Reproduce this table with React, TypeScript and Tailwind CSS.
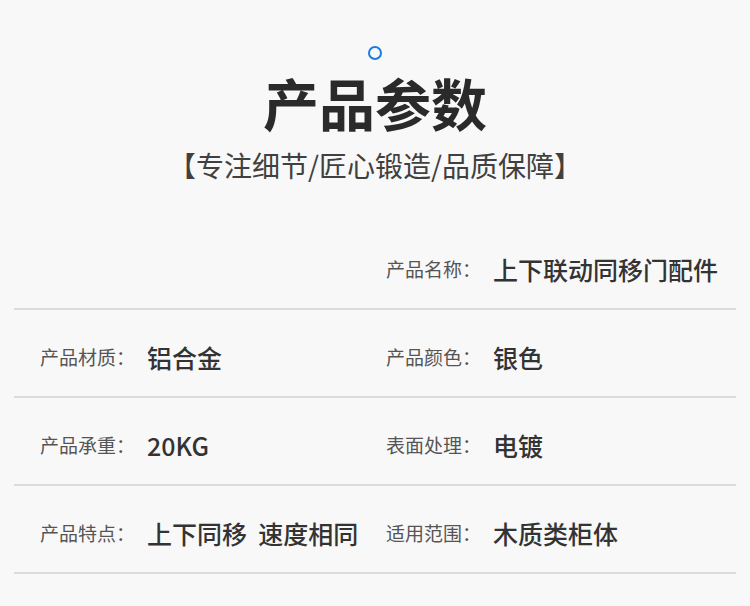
const specs: { label: string; value: string }[][] = [
  [
    { label: "", value: "" },
    { label: "产品名称：", value: "上下联动同移门配件" },
  ],
  [
    { label: "产品材质：", value: "铝合金" },
    { label: "产品颜色：", value: "银色" },
  ],
  [
    { label: "产品承重：", value: "20KG" },
    { label: "表面处理：", value: "电镀" },
  ],
  [
    { label: "产品特点：", value: "上下同移  速度相同" },
    { label: "适用范围：", value: "木质类柜体" },
  ],
];

function Cell({ label, value }: { label: string; value: string }) {
  if (!label) return <div />;
  return (
    <div className="flex items-center whitespace-pre">
      <span className="text-[19px] leading-8 text-[#555555]">{label}</span>
      <span className="ml-[12px] text-[25px] font-medium leading-8 text-[#333333]">
        {value}
      </span>
    </div>
  );
}

export default function App() {
  return (
    <div
      className="min-h-[606px] w-[750px] bg-[#f8f8f8] pt-[46px]"
      style={{ fontFamily: '"Noto Sans CJK SC", "Noto Sans", sans-serif' }}
    >
      <div className="flex flex-col items-center">
        <span className="h-[14px] w-[14px] rounded-full border-2 border-[#1a7ae6]" />
        <h1 className="mt-[14px] text-[56px] font-bold leading-[56px] text-[#2a2a2a]">
          产品参数
        </h1>
        <p className="mt-[19px] text-[28px] leading-8 text-[#404040]">
          【专注细节/匠心锻造/品质保障】
        </p>
      </div>

      <div className="mt-[41px] px-[14px]">
        {specs.map((row, i) => (
          <div
            key={i}
            className="grid grid-cols-[346px_1fr] border-b-2 border-[#dcdcdc] pb-[23px] pl-[26px] pt-[31px]"
          >
            {row.map((cell, j) => (
              <Cell key={j} label={cell.label} value={cell.value} />
            ))}
          </div>
        ))}
      </div>
    </div>
  );
}
